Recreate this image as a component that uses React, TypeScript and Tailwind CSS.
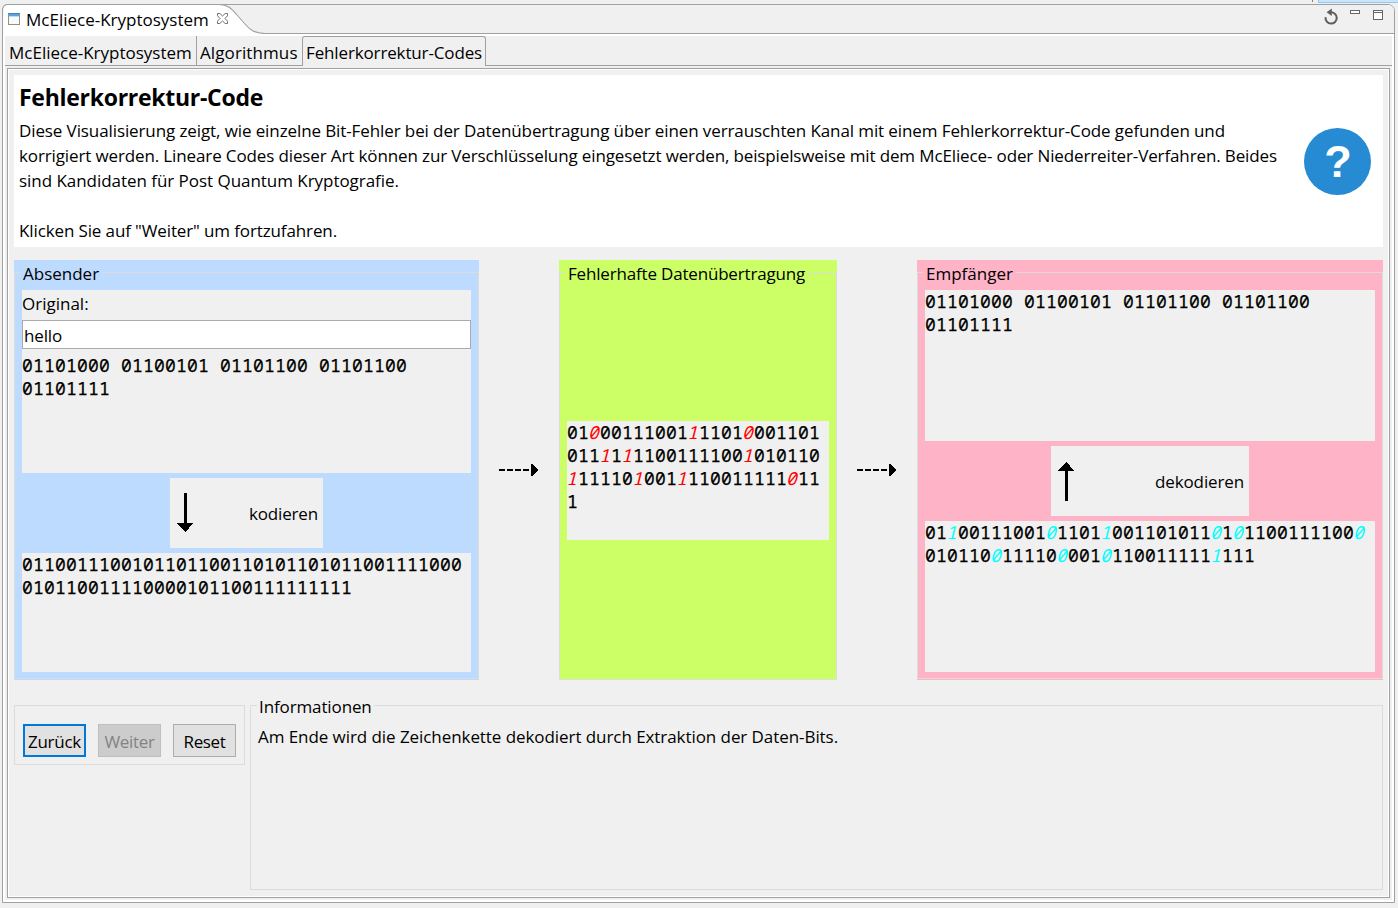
import type { ReactNode } from "react";

const sans = "font-['Open_Sans','Noto_Sans',sans-serif]";
const mono =
  "font-['Noto_Sans_Mono','DejaVu_Sans_Mono',monospace] slashed-zero text-[18px] leading-[23px] tracking-[0.2px] [-webkit-text-stroke:0.25px] whitespace-pre";

type BitRow = { text: string; marks?: number[] };

function Bits({ rows, markClass = "" }: { rows: BitRow[]; markClass?: string }) {
  return (
    <div className={mono}>
      {rows.map((row, r) => (
        <div key={r} className="h-[23px]">
          {row.marks
            ? row.text.split("").map((bit, i) =>
                row.marks!.includes(i) ? (
                  <i key={i} className={`relative -left-px [-webkit-text-stroke:0px] ${markClass}`}>
                    {bit}
                  </i>
                ) : (
                  bit
                ),
              )
            : row.text}
        </div>
      ))}
    </div>
  );
}

function Group({
  title,
  className,
  legendClass,
  children,
}: {
  title: string;
  className: string;
  legendClass: string;
  children: ReactNode;
}) {
  return (
    <section className={`relative flex flex-col h-[420px] px-2 ${className}`}>
      <div className="absolute inset-x-0 top-3 bottom-px border border-[#dcdcdc]" />
      <div className="relative flex h-[30px] shrink-0">
        <h2 className={`-ml-0.5 h-[27px] px-[3px] leading-[27px] whitespace-nowrap ${legendClass}`}>{title}</h2>
      </div>
      <div className="relative flex flex-col grow">{children}</div>
    </section>
  );
}

function FlowArrow() {
  return (
    <div className="flex w-20 h-[420px] items-center pl-5">
      <svg width="39" height="14" viewBox="0 0 39 14" shapeRendering="crispEdges">
        <path d="M0 7H32" stroke="#000" strokeWidth="2" strokeDasharray="6 2" />
        <path d="M32 1H33.5L39 7L33.5 13H32Z" fill="#000" />
      </svg>
    </div>
  );
}

function WindowHeader() {
  return (
    <div className="flex h-[29px] shrink-0 rounded-t-[6px] bg-[#f0f0f0]">
      <div className="relative flex w-[262px] items-center pl-[5px]">
        <svg className="absolute -left-px -top-px" width="263" height="30" viewBox="0 0 263 30">
          <path
            d="M0.5 30V6.5Q0.5 0.5 6.5 0.5H217C226 0.5 230 5 235 11L243 20C248 26 253 29.5 263 29.5V30Z"
            fill="#fff"
          />
          <path
            d="M0.5 30V6.5Q0.5 0.5 6.5 0.5H217C226 0.5 230 5 235 11L243 20C248 26 253 29.5 263 29.5"
            fill="none"
            stroke="#a0a0a0"
            strokeWidth="1.1"
          />
        </svg>
        <svg className="relative -mt-px" width="12" height="12" viewBox="0 0 12 12" shapeRendering="crispEdges">
          <rect x="0.5" y="0.5" width="11" height="11" fill="#f4fbff" stroke="#9c8f6c" />
          <rect x="0" y="0" width="12" height="1" fill="#4a7fb0" />
          <rect x="0" y="1" width="12" height="2" fill="#5fa0d6" />
          <rect x="1" y="3" width="10" height="1" fill="#b9dcf3" />
        </svg>
        <span className="relative ml-[6px] h-[27px] leading-[27px]">McEliece-Kryptosystem</span>
        <svg className="relative ml-2 -mt-0.5" width="11" height="11" viewBox="0 0 11 11">
          <path
            d="M0.5 0.5H2.8L5.5 3L8.2 0.5H10.5V2.8L8 5.5L10.5 8.2V10.5H8.2L5.5 8L2.8 10.5H0.5V8.2L3 5.5L0.5 2.8Z"
            fill="#fff"
            stroke="#707070"
            strokeWidth="1"
          />
        </svg>
      </div>
      <div className="flex grow justify-end rounded-tr-[6px] border-b border-[#a0a0a0] pr-[11px] pt-[3px]">
        <svg width="61" height="18" viewBox="0 0 61 18">
          <path d="M3.6 9.2A5.6 5.6 0 1 0 8.5 4.4" fill="none" stroke="#5f5f5f" strokeWidth="2" />
          <path d="M9.8 0.4V8L4.6 4.2Z" fill="#5f5f5f" />
          <g fill="#fff" stroke="#666" shapeRendering="crispEdges">
            <rect x="28.5" y="2.5" width="9" height="3" />
            <rect x="51.5" y="2.5" width="9" height="9" />
            <path d="M51 4.5H61" />
          </g>
        </svg>
      </div>
    </div>
  );
}

function Tabs() {
  return (
    <div className="flex h-[30px] shrink-0 leading-[33px] whitespace-nowrap">
      <div className="w-[192px] border-b border-r border-[#a0a0a0] pl-1">McEliece-Kryptosystem</div>
      <div className="w-[105px] border-b border-[#a0a0a0] pl-[3px] tracking-[0.1px]">Algorithmus</div>
      <div className="w-[184px] rounded-t-[3px] border-x border-t border-[#a0a0a0] pl-[3px] leading-[31px] tracking-[-0.14px]">
        Fehlerkorrektur-Codes
      </div>
      <div className="grow border-b border-[#a0a0a0]" />
    </div>
  );
}

function Intro() {
  return (
    <div className="flex h-[172px] shrink-0 bg-white pl-[5px]">
      <div className="grow whitespace-nowrap leading-[25px]">
        <h1 className="mt-2 h-7 text-[23px] font-bold leading-7 tracking-[-0.28px]">Fehlerkorrektur-Code</h1>
        <div className="mt-[7px]">
          <p className="tracking-[-0.102px]">
            Diese Visualisierung zeigt, wie einzelne Bit-Fehler bei der Datenübertragung über einen verrauschten Kanal
            mit einem Fehlerkorrektur-Code gefunden und
          </p>
          <p className="tracking-[-0.126px]">
            korrigiert werden. Lineare Codes dieser Art können zur Verschlüsselung eingesetzt werden, beispielsweise
            mit dem McEliece- oder Niederreiter-Verfahren. Beides
          </p>
          <p className="tracking-[-0.04px]">sind Kandidaten für Post Quantum Kryptografie.</p>
          <p className="mt-[25px] tracking-[-0.122px]">Klicken Sie auf "Weiter" um fortzufahren.</p>
        </div>
      </div>
      <div className="mr-[12.5px] mt-[52.5px] flex size-[67px] shrink-0 items-center justify-center rounded-full bg-[#268bd2] pl-[2px] font-['Liberation_Sans',sans-serif] text-[45px] font-bold leading-[67px] text-white">
        ?
      </div>
    </div>
  );
}

function Sender() {
  return (
    <Group title="Absender" className="w-[465px] bg-[#bddbff]" legendClass="bg-[#bddbff]">
      <div className="h-[183px] w-[449px] bg-[#f0f0f0]">
        <div className="h-[30px] leading-[27px]">Original:</div>
        <input
          readOnly
          value="hello"
          className="block h-[29px] w-full border border-[#ababab] bg-white pl-px pt-px tracking-[-0.15px] outline-none"
        />
        <div className="pt-[5px]">
          <Bits rows={[{ text: "01101000 01100101 01101100 01101100" }, { text: "01101111" }]} />
        </div>
      </div>
      <div className="mt-[5px] ml-[148px] flex h-[70px] w-[153px] items-center justify-between bg-[#f0f0f0] pl-[7px] pr-[5px]">
        <svg width="16" height="40" viewBox="0 0 16 40" shapeRendering="crispEdges">
          <path d="M7 0H10V30H16L8.5 39.5L0 30H7Z" fill="#000" />
        </svg>
        <span className="pt-[2px] tracking-[-0.16px]">kodieren</span>
      </div>
      <div className="mt-[5px] h-[119px] w-[449px] bg-[#f0f0f0]">
        <Bits
          rows={[{ text: "0110011100101101100110101101011001111000" }, { text: "010110011110000101100111111111" }]}
        />
      </div>
    </Group>
  );
}

function Channel() {
  return (
    <Group
      title="Fehlerhafte Datenübertragung"
      className="w-[278px] bg-[#ccff66]"
      legendClass="bg-[#ccff66] tracking-[-0.18px]"
    >
      <div className="mt-[131px] h-[119px] w-[262px] bg-[#f0f0f0]">
        <Bits
          markClass="text-[#ff0000]"
          rows={[
            { text: "01000111001111010001101", marks: [2, 11, 16] },
            { text: "01111111001111001010110", marks: [3, 5, 16] },
            { text: "11111010011110011111011", marks: [0, 6, 10, 20] },
            { text: "1" },
          ]}
        />
      </div>
    </Group>
  );
}

function Receiver() {
  return (
    <Group title="Empfänger" className="w-[466px] bg-[#ffb3c7]" legendClass="bg-[#ffb3c7]">
      <div className="h-[151px] w-[450px] bg-[#f0f0f0]">
        <Bits rows={[{ text: "01101000 01100101 01101100 01101100" }, { text: "01101111" }]} />
      </div>
      <div className="mt-[5px] ml-[126px] flex h-[70px] w-[198px] items-center justify-between bg-[#f0f0f0] pl-[7px] pr-[5px]">
        <svg width="16" height="40" viewBox="0 0 16 40" shapeRendering="crispEdges">
          <path d="M7 40H10V10H16L8.5 0.5L0 10H7Z" fill="#000" />
        </svg>
        <span className="pt-[2px] tracking-[-0.13px]">dekodieren</span>
      </div>
      <div className="mt-[5px] h-[151px] w-[450px] bg-[#f0f0f0]">
        <Bits
          markClass="text-[#00ffff]"
          rows={[
            { text: "0110011100101101100110101101011001111000", marks: [2, 11, 16, 26, 28, 39] },
            { text: "010110011110000101100111111111", marks: [6, 12, 16, 26] },
          ]}
        />
      </div>
    </Group>
  );
}

function Controls() {
  const base = "h-[33px] w-[63px] pt-[3px] text-center";
  return (
    <div className="flex h-[60px] w-[231px] gap-3 border border-[#dcdcdc] pl-2 pt-[18px]">
      <button className={`${base} border-2 border-[#0078d7] bg-[#e1e1e1] tracking-[-0.27px]`}>Zurück</button>
      <button disabled className={`${base} border border-[#bfbfbf] bg-[#cccccc] text-[#838383] tracking-[-0.35px]`}>
        Weiter
      </button>
      <button className={`${base} border border-[#adadad] bg-[#e1e1e1] tracking-[-0.35px]`}>Reset</button>
    </div>
  );
}

function Info() {
  return (
    <div className="relative h-[185px] grow border border-[#dcdcdc] pl-[7px] pt-[18px] leading-[25px]">
      <h2 className="absolute -top-3 left-[6px] bg-[#f0f0f0] px-[2px] tracking-[-0.12px]">Informationen</h2>
      <p className="tracking-[-0.067px]">Am Ende wird die Zeichenkette dekodiert durch Extraktion der Daten-Bits.</p>
    </div>
  );
}

export default function App() {
  return (
    <div className={`relative h-[908px] w-[1398px] overflow-hidden bg-[#f0f0f0] pl-[2px] pt-1 text-[17px] text-black ${sans}`}>
      <div className="absolute right-0 top-0 h-[3px] w-20 border-b border-l border-[#90c8f6] bg-[#cce4f7]" />
      <div className="absolute left-[1312px] top-0 h-[2px] w-px bg-[#808080]" />
      <div className="relative flex h-[899px] w-[1393px] flex-col rounded-t-[7px] border border-[#a0a0a0] bg-white">
        <WindowHeader />
        <div className="flex grow flex-col p-[2px]">
          <div className="flex grow flex-col bg-[#f0f0f0]">
            <Tabs />
            <div className="mx-[2px] mb-[2px] mt-[2px] grow border border-[#a0a0a0]">
              <div className="flex h-full flex-col border border-white p-[5px]">
                <Intro />
                <div className="mt-[13px] flex">
                  <Sender />
                  <FlowArrow />
                  <Channel />
                  <FlowArrow />
                  <Receiver />
                </div>
                <div className="mt-[25px] flex gap-[5px]">
                  <Controls />
                  <Info />
                </div>
              </div>
            </div>
          </div>
        </div>
      </div>
    </div>
  );
}
